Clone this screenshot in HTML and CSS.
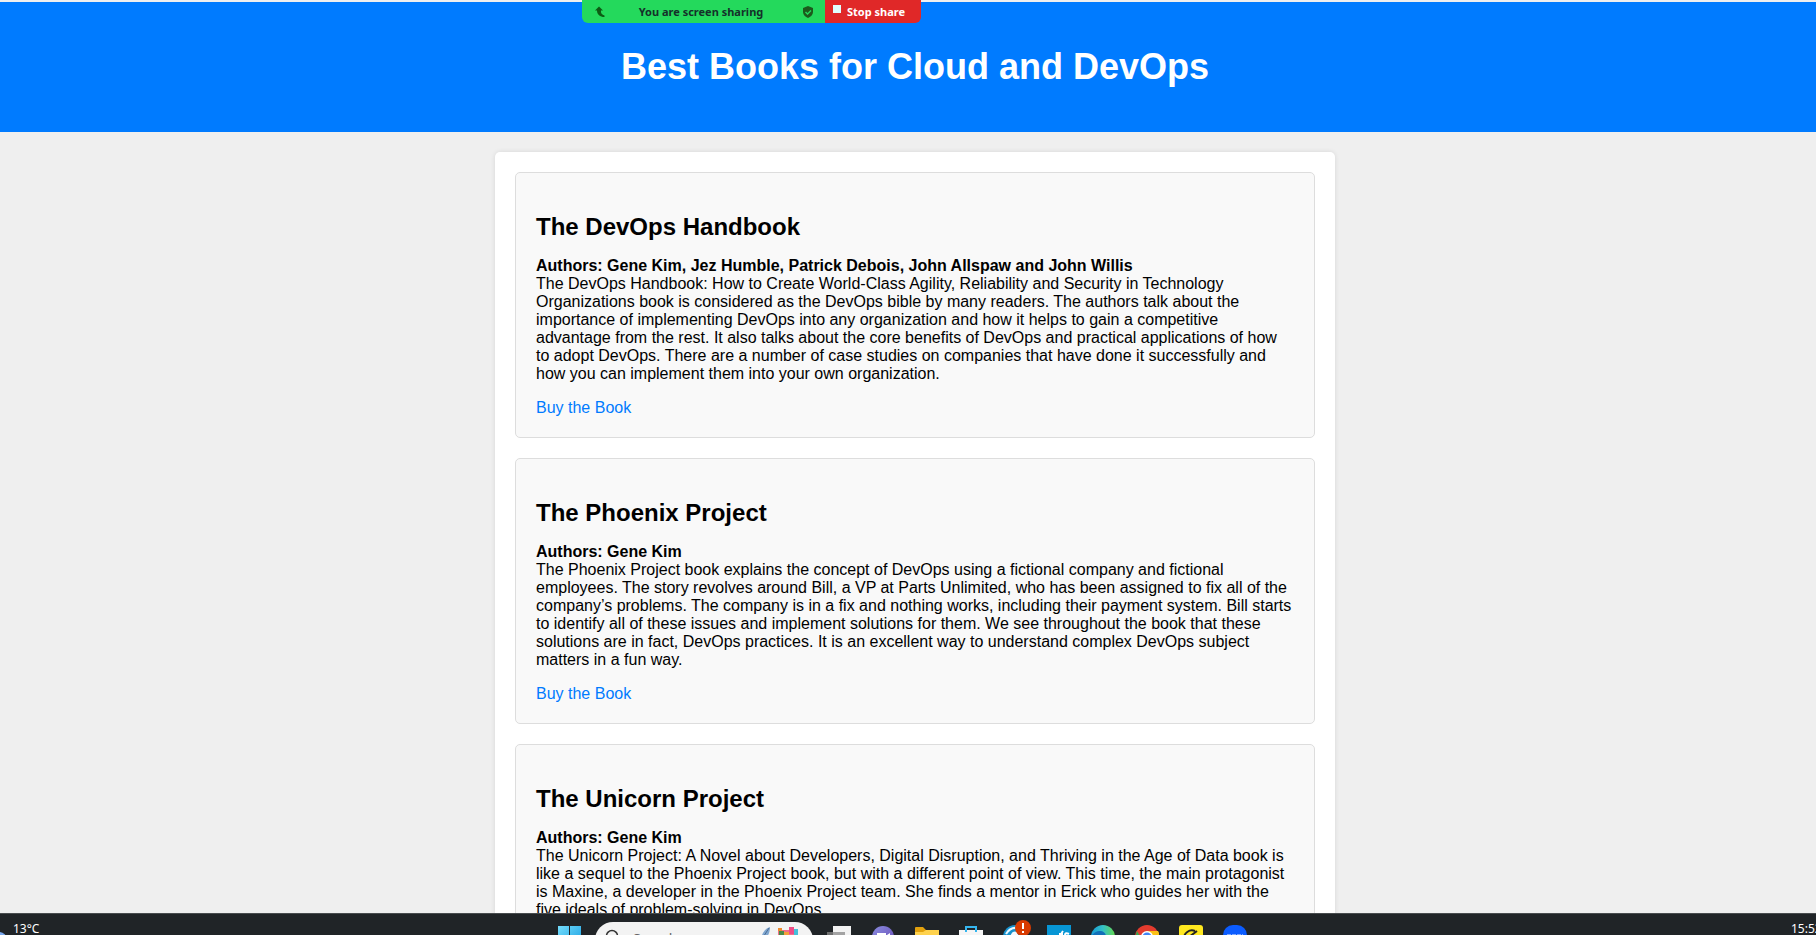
FILE: index.html
```html
<!DOCTYPE html>
<html lang="en">
<head>
<meta charset="utf-8">
<title>Best Books for Cloud and DevOps</title>
<link rel="stylesheet" href="styles.css">
</head>
<body>
<div class="page">
  <header class="hero"><h1>Best Books for Cloud and DevOps</h1></header>
  <main class="books">
    <article class="book">
      <h2>The DevOps Handbook</h2>
      <p><strong>Authors: Gene Kim, Jez Humble, Patrick Debois, John Allspaw and John Willis</strong><br>The DevOps Handbook: How to Create World-Class Agility, Reliability and Security in Technology Organizations book is considered as the DevOps bible by many readers. The authors talk about the importance of implementing DevOps into any organization and how it helps to gain a competitive advantage from the rest. It also talks about the core benefits of DevOps and practical applications of how to adopt DevOps. There are a number of case studies on companies that have done it successfully and how you can implement them into your own organization.</p>
      <a href="#handbook">Buy the Book</a>
    </article>
    <article class="book">
      <h2>The Phoenix Project</h2>
      <p><strong>Authors: Gene Kim</strong><br>The Phoenix Project book explains the concept of DevOps using a fictional company and fictional employees. The story revolves around Bill, a VP at Parts Unlimited, who has been assigned to fix all of the company’s problems. The company is in a fix and nothing works, including their payment system. Bill starts to identify all of these issues and implement solutions for them. We see throughout the book that these solutions are in fact, DevOps practices. It is an excellent way to understand complex DevOps subject matters in a fun way.</p>
      <a href="#phoenix">Buy the Book</a>
    </article>
    <article class="book">
      <h2>The Unicorn Project</h2>
      <p><strong>Authors: Gene Kim</strong><br>The Unicorn Project: A Novel about Developers, Digital Disruption, and Thriving in the Age of Data book is like a sequel to the Phoenix Project book, but with a different point of view. This time, the main protagonist is Maxine, a developer in the Phoenix Project team. She finds a mentor in Erick who guides her with the five ideals of problem-solving in DevOps.</p>
      <a href="#unicorn">Buy the Book</a>
    </article>
  </main>
</div>

<div class="share">
  <div class="share-status">
    <svg width="12" height="12" viewBox="0 0 12 12"><path d="M5 0.500 9 4.500H7C6.500 7 8 9 10.500 9.500V11C6 11 3 8.500 3 4.500H1Z" fill="#0d5c14"/></svg>
    <span class="share-text">You are screen sharing</span>
    <svg width="12" height="12" viewBox="0 0 12 12"><path d="M6 0 11 2V6C11 9 8.500 11 6 12 3.500 11 1 9 1 6V2Z" fill="#1c5a1c"/><path d="M3.500 6 5.500 8 9 4.500" fill="none" stroke="#24d95c" stroke-width="1.400"/></svg>
  </div>
  <button class="share-stop" type="button"><span class="stop-icon"></span>Stop share</button>
</div>

<footer class="taskbar">
  <div class="weather">
    <svg width="13" height="14" viewBox="0 0 13 14"><circle cx="-1" cy="9" r="8" fill="#79a8ee"/></svg>
    <span>13°C</span>
  </div>
  <nav class="apps" aria-label="Taskbar">
    <button class="app" type="button" aria-label="Start"><svg width="24" height="24"><defs><linearGradient id="win" x2="1" y2="1"><stop stop-color="#74dcfb"/><stop offset="1" stop-color="#139be0"/></linearGradient></defs><path d="M0 1H11V12H0ZM12 1H23V12H12ZM0 13H11V24H0ZM12 13H23V24H12Z" fill="url(#win)"/></svg></button>
    <div class="search">
      <svg width="16" height="16" viewBox="0 0 16 16"><circle cx="7" cy="7" r="5.500" fill="none" stroke="#333" stroke-width="1.500"/><path d="M11 11 15 15" stroke="#333" stroke-width="1.500"/></svg>
      <input type="text" placeholder="Search" aria-label="Search">
      <svg width="44" height="24" viewBox="0 0 44 24"><path d="M9 0C3 2 1 7 0 12L5 11C8 8 9 4 9 0Z" fill="#7fa6cf"/><path d="M8 1 1 12" stroke="#4a6b94"/><path d="M17 3H28V0H33V2H37V12H17Z" fill="#f0708c"/><path d="M17 1H21V4H17Z" fill="#f08a2c"/><path d="M18 4H23V12H18Z" fill="#4a8b48"/><path d="M23 5H28V12H23Z" fill="#f4a13b"/><path d="M28 0H33V7H28Z" fill="#ef4d86"/><path d="M33 2H37V12H33Z" fill="#45c0da"/></svg>
    </div>
    <button class="app" type="button" aria-label="Task view"><svg width="24" height="24"><path d="M6 1H24V18H6Z" fill="#f2f2f2"/><path d="M0 7H18V22H0Z" fill="#888" opacity=".75"/></svg></button>
    <button class="app" type="button" aria-label="Chat"><svg width="24" height="24"><defs><linearGradient id="chat" x2="1" y2="1"><stop stop-color="#8b8de0"/><stop offset="1" stop-color="#6549b4"/></linearGradient></defs><circle cx="12" cy="12" r="11" fill="url(#chat)"/><path d="M6 8H15V16H6ZM16 10 19 8V15L16 13Z" fill="#fff"/></svg></button>
    <button class="app" type="button" aria-label="File Explorer"><svg width="24" height="24"><path d="M0 3Q0 2 1 2H8L11 5H23Q24 5 24 6V20H0Z" fill="#e2a10e"/><path d="M0 7H8L11 5H24V22H0Z" fill="#ffd24d"/></svg></button>
    <button class="app" type="button" aria-label="Store"><svg width="24" height="24"><path d="M7 6V2H17V6" fill="none" stroke="#35b6ef" stroke-width="2"/><path d="M0 5H24V22H0Z" fill="#f5f5f5"/><path d="M6 5H8V7H6ZM16 5H18V7H16Z" fill="#35b6ef"/></svg></button>
    <button class="app alert" type="button" aria-label="Updates"><svg width="28" height="29" viewBox="0 -5 28 29"><circle cx="12" cy="12" r="12" fill="#1791cc"/><path d="M3 9Q7 2 14 3" stroke="#e9f7ff" stroke-width="2" fill="none"/><path d="M7 12Q9 5 14 7L16 12Z" fill="#f2faff"/><circle cx="20" cy="3" r="8" fill="#d83b01"/><path d="M20-2V4M20 6V8" stroke="#fff" stroke-width="2"/></svg></button>
    <button class="app" type="button" aria-label="Editor"><svg width="24" height="24"><path d="M0 0H24V24H0Z" fill="#0796d5"/><path d="M16 6Q13 10 12 16M12 9H16M22 9Q18 7 18 10 20 12 22 12" stroke="#fff" stroke-width="2" fill="none"/></svg></button>
    <button class="app" type="button" aria-label="Edge"><svg width="24" height="24"><defs><linearGradient id="edge" x2="1"><stop stop-color="#169bd8"/><stop offset=".5" stop-color="#35c1c5"/><stop offset="1" stop-color="#65d850"/></linearGradient></defs><circle cx="12" cy="12" r="12" fill="url(#edge)"/><path d="M0 12Q4 5 10 6 15 7 15 12Z" fill="#126fb8"/></svg></button>
    <button class="app" type="button" aria-label="Chrome"><svg width="24" height="24"><circle cx="12" cy="12" r="12" fill="#e33b2e"/><path d="M2 6 12 23A12 12 0 0 1 2 6Z" fill="#34a853"/><path d="M12 6H23A12 12 0 0 1 12 24Z" fill="#fbc116"/><circle cx="12" cy="12" r="6" fill="#fff"/><circle cx="12" cy="12" r="4.500" fill="#4285f4"/></svg></button>
    <button class="app" type="button" aria-label="Notes"><svg width="24" height="24"><rect width="24" height="24" rx="3" fill="#ffe81f"/><path d="M5 14A8 8 0 0 1 16 6M10 12 18 6" fill="none" stroke="#222" stroke-width="2"/></svg></button>
    <button class="app" type="button" aria-label="Zoom"><svg width="24" height="24"><rect width="24" height="24" rx="10" fill="#0b5cff"/><path d="M4 10H20" stroke="#7ba6ff" stroke-width="2" stroke-dasharray="4 1"/></svg></button>
  </nav>
  <time class="clock">15:52</time>
</footer>
</body>
</html>
```
FILE: styles.css
```css
* { box-sizing: border-box; }
body {
  margin: 0;
  height: 100vh;
  overflow: hidden;
  display: flex;
  flex-direction: column;
  background: #efefef;
  font: 16px/18px "Liberation Sans", Arial, sans-serif;
  color: #000;
}
.page {
  flex: 1;
  min-height: 0;
  width: calc(100% + 14px);
  overflow: hidden;
  border-top: 2px solid #efefef;
}
.hero { padding: 20px; background: #007bff; color: #fff; text-align: center; }
.hero h1 { margin: 24px 0; font-size: 36px; line-height: 42px; }
.books {
  max-width: 840px;
  margin: 20px auto;
  padding: 20px;
  display: flex;
  flex-direction: column;
  gap: 20px;
  background: #fff;
  border-radius: 5px;
  box-shadow: 0 0 5px rgba(0, 0, 0, .1);
}
.book { padding: 20px; background: #f9f9f9; border: 1px solid #ddd; border-radius: 5px; }
.book h2 { margin: 20px 0 16px; font-size: 24px; line-height: 28px; }
.book p { margin: 0 0 16px; }
.book a { color: #007bff; text-decoration: none; }

.share {
  position: absolute;
  top: 0;
  left: 582px;
  display: flex;
  height: 23px;
  border-radius: 0 0 6px 6px;
  overflow: hidden;
  font: bold 11px/23px "Noto Sans", sans-serif;
}
.share-status {
  display: flex;
  align-items: center;
  width: 243px;
  padding: 0 11px 0 12px;
  background: #24d95c;
  color: #15302a;
}
.share-text { flex: 1; padding-right: 6px; text-align: center; }
.share-stop {
  display: flex;
  align-items: center;
  gap: 6px;
  width: 96px;
  padding: 0 8px;
  border: 0;
  background: #e02828;
  color: #fff;
  font: inherit;
  white-space: nowrap;
}
.stop-icon { width: 8px; height: 8px; margin-bottom: 5px; background: #e0ffff; }

.taskbar {
  position: relative;
  display: flex;
  justify-content: space-between;
  height: 22px;
  overflow: hidden;
  border-top: 1px solid #484c4e;
  background: #202427;
  color: #fff;
  font: 12px/16px "Noto Sans", sans-serif;
}
.weather { display: flex; align-items: flex-start; padding-top: 7px; }
.weather svg { margin-top: 10px; }
.apps {
  position: absolute;
  top: 0;
  left: 558px;
  display: flex;
  gap: 20px;
  padding-top: 11px;
}
.app { display: block; width: 24px; height: 24px; padding: 0; border: 0; background: none; }
.app svg { display: block; }
.alert svg { margin-top: -5px; }
.search {
  display: flex;
  align-items: flex-start;
  gap: 12px;
  width: 218px;
  height: 36px;
  margin: -3px -6px 0 -7px;
  padding: 7px 8px 0 10px;
  border-radius: 18px;
  background: #f3f3f3;
}
.search input {
  flex: 1;
  min-width: 0;
  padding: 0;
  border: 0;
  background: none;
  font: 14px/20px "Noto Sans", sans-serif;
}
.search input::placeholder { color: #666; }
.search > svg:last-child { margin-top: -2px; }
.clock { padding-top: 7px; width: 25px; white-space: nowrap; }
```
